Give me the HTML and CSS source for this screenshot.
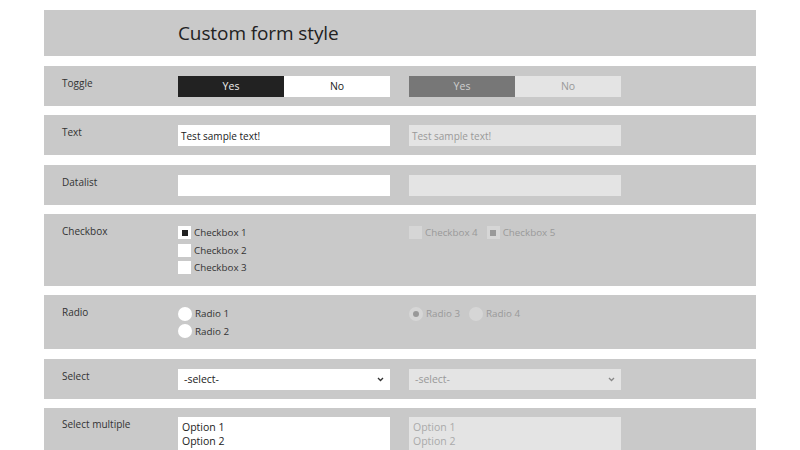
FILE: index.html
```html
<!DOCTYPE html>
<html lang="en">
<head>
<meta charset="utf-8">
<title>Custom form style</title>
<link rel="stylesheet" href="styles.css">
</head>
<body>
<main class="page">
  <header class="section head">
    <h1 class="title">Custom form style</h1>
  </header>

  <section class="section row">
    <div class="label">Toggle</div>
    <div class="toggle">
      <span class="tg on">Yes</span><span class="tg">No</span>
    </div>
    <div class="toggle disabled">
      <span class="tg on">Yes</span><span class="tg">No</span>
    </div>
  </section>

  <section class="section row">
    <div class="label">Text</div>
    <div class="input">Test sample text!</div>
    <div class="input disabled">Test sample text!</div>
  </section>

  <section class="section row">
    <div class="label">Datalist</div>
    <div class="input"></div>
    <div class="input disabled"></div>
  </section>

  <section class="section row">
    <div class="label">Checkbox</div>
    <div class="stack">
      <label class="opt"><span class="box checked"></span>Checkbox 1</label>
      <label class="opt"><span class="box"></span>Checkbox 2</label>
      <label class="opt"><span class="box"></span>Checkbox 3</label>
    </div>
    <div class="inline disabled">
      <label class="opt"><span class="box"></span>Checkbox 4</label>
      <label class="opt"><span class="box checked"></span>Checkbox 5</label>
    </div>
  </section>

  <section class="section row">
    <div class="label">Radio</div>
    <div class="stack">
      <label class="opt"><span class="box round"></span>Radio 1</label>
      <label class="opt"><span class="box round"></span>Radio 2</label>
    </div>
    <div class="inline disabled">
      <label class="opt"><span class="box round checked"></span>Radio 3</label>
      <label class="opt"><span class="box round"></span>Radio 4</label>
    </div>
  </section>

  <section class="section row">
    <div class="label">Select</div>
    <div class="select"><span>-select-</span>
      <svg class="chev" viewBox="0 0 8 6" width="7" height="5"><path d="M1 1.2 L4 4.2 L7 1.2" fill="none" stroke="currentColor" stroke-width="1.6"/></svg>
    </div>
    <div class="select disabled"><span>-select-</span>
      <svg class="chev" viewBox="0 0 8 6" width="7" height="5"><path d="M1 1.2 L4 4.2 L7 1.2" fill="none" stroke="currentColor" stroke-width="1.6"/></svg>
    </div>
  </section>

  <section class="section row last">
    <div class="label">Select multiple</div>
    <div class="multi">
      <div>Option 1</div>
      <div>Option 2</div>
    </div>
    <div class="multi disabled">
      <div>Option 1</div>
      <div>Option 2</div>
    </div>
  </section>
</main>
</body>
</html>
```

FILE: styles.css
```css
* { box-sizing: border-box; }

html, body {
  margin: 0;
  padding: 0;
  background: #ffffff;
  font-family: "Open Sans", "Noto Sans", "DejaVu Sans", sans-serif;
  color: #333333;
  font-size: 10px;
}

.page {
  width: 712px;
  margin-left: 44px;
  padding-top: 10px;
}

.section {
  background: #c9c9c9;
  margin-bottom: 9.5px;
}

.head {
  height: 46px;
  display: flex;
  align-items: center;
  padding-left: 134px;
}

.title {
  margin: 0;
  font-weight: 400;
  font-size: 19px;
  color: #222222;
  letter-spacing: -0.1px;
}

.row {
  display: grid;
  grid-template-columns: 97px 212px 212px;
  column-gap: 19px;
  padding: 10px 0 9px 18px;
  align-items: start;
}

.row.last {
  padding-top: 9px;
}

.label {
  line-height: 14px;
  color: #333333;
}

.toggle {
  display: flex;
  height: 21px;
}

.tg {
  flex: 1;
  display: flex;
  align-items: center;
  justify-content: center;
  background: #ffffff;
  color: #222222;
  font-size: 10.5px;
}

.tg.on {
  background: #222222;
  color: #eeeeee;
}

.toggle.disabled .tg {
  background: #e4e4e4;
  color: #999999;
}

.toggle.disabled .tg.on {
  background: #777777;
  color: #cfcfcf;
}

.input {
  height: 21px;
  background: #ffffff;
  color: #222222;
  padding: 0 3px;
  display: flex;
  align-items: center;
}

.input.disabled {
  background: #e4e4e4;
  color: #999999;
}

.stack {
  display: flex;
  flex-direction: column;
}

.inline {
  display: flex;
  gap: 9px;
}

.opt {
  display: flex;
  align-items: center;
  height: 17.5px;
  gap: 3px;
  color: #333333;
  font-size: 9.8px;
}

.box {
  width: 13px;
  height: 13px;
  background: #ffffff;
  display: flex;
  align-items: center;
  justify-content: center;
}

.box.checked::after {
  content: "";
  width: 6px;
  height: 6px;
  background: #222222;
}

.box.round {
  border-radius: 50%;
  width: 14px;
  height: 14px;
}

.box.round.checked::after {
  border-radius: 50%;
}

.disabled .opt {
  color: #999999;
}

.disabled .box {
  background: #d6d6d6;
}

.disabled .box.checked::after {
  background: #999999;
}

.select {
  height: 21px;
  background: #ffffff;
  color: #222222;
  display: flex;
  align-items: center;
  justify-content: space-between;
  padding: 0 6px;
  font-size: 10.5px;
}

.select .chev {
  color: #333333;
}

.select.disabled {
  background: #e4e4e4;
  color: #999999;
}

.select.disabled .chev {
  color: #888888;
}

.multi {
  height: 34px;
  background: #ffffff;
  color: #222222;
  padding: 3px 4px 0;
  line-height: 14px;
  font-size: 10.5px;
}

.multi.disabled {
  background: #e4e4e4;
  color: #aaaaaa;
}
```
